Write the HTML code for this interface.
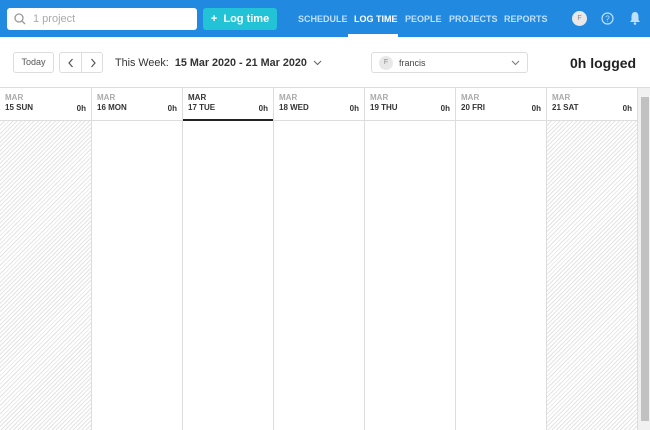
<!DOCTYPE html>
<html><head><style>
*{box-sizing:border-box;margin:0;padding:0}
body{width:650px;height:430px;overflow:hidden;background:#fff;font-family:"Liberation Sans",sans-serif;position:relative}
.top{position:absolute;left:0;top:0;width:650px;height:37px;background:#2189df}
.search{position:absolute;left:7px;top:8px;width:190px;height:22px;background:#fff;border-radius:3px}
.search span{position:absolute;left:26px;top:5px;font-size:11px;color:#aaa}
.btn{position:absolute;left:203px;top:8px;width:74px;height:22px;background:#22c3d6;border-radius:3px;color:#fff;font-size:11px;font-weight:bold;line-height:22px;text-align:center}
.nav{position:absolute;top:14px;font-size:9px;font-weight:bold;color:#bfe0fb}
.av{position:absolute;left:572px;top:11px;width:15px;height:15px;border-radius:50%;background:#e8e8e8;font-size:7px;color:#888;text-align:center;line-height:15px}
.box{position:absolute;border:1px solid #ddd;border-radius:3px;background:#fff}
.col{position:absolute;top:88px;height:342px;width:91px;border-left:1px solid #ddd}
.hatch{background:repeating-linear-gradient(135deg,#fff 0 2px,#e4e4e4 2px 3px)}
.hd{position:absolute;left:0;top:0;width:100%;height:33px;background:#fff;border-bottom:1px solid #ddd;font-size:8px;font-weight:bold;padding:5px 0 0 5px}
.hd .m{color:#aaa}
.hd .d{color:#333;margin-top:1px}
.hd .h{position:absolute;right:5px;top:16px;color:#333}
</style></head><body>
<div class="top">
 <div class="search"><svg style="position:absolute;left:7px;top:5px" width="12" height="12"><circle cx="5" cy="5" r="4" fill="none" stroke="#999" stroke-width="1.3"/><line x1="8" y1="8" x2="11" y2="11" stroke="#999" stroke-width="1.3"/></svg><span>1 project</span></div>
 <div class="btn">+&nbsp; Log time</div>
 <div class="nav" style="left:298px">SCHEDULE</div>
 <div class="nav" style="left:354px;color:#fff">LOG TIME</div>
 <div style="position:absolute;left:348px;top:34px;width:50px;height:3px;background:#fff"></div>
 <div class="nav" style="left:405px">PEOPLE</div>
 <div class="nav" style="left:449px">PROJECTS</div>
 <div class="nav" style="left:504px">REPORTS</div>
 <div class="av">F</div>
 <svg style="position:absolute;left:601px;top:12px" width="13" height="13"><circle cx="6.5" cy="6.5" r="5.5" fill="none" stroke="#bfe0fb" stroke-width="1.2"/><text x="6.5" y="9.5" font-size="8" fill="#bfe0fb" text-anchor="middle" font-family="Liberation Sans">?</text></svg>
 <svg style="position:absolute;left:629px;top:11px" width="12" height="14"><path d="M6 1C3 1 2.5 4 2.5 6V9L1 11H11L9.5 9V6C9.5 4 9 1 6 1Z" fill="#bfe0fb"/><circle cx="6" cy="12.5" r="1.3" fill="#bfe0fb"/></svg>
</div>
<div class="box" style="left:13px;top:52px;width:41px;height:21px;font-size:9px;color:#555;text-align:center;line-height:19px">Today</div>
<div class="box" style="left:59px;top:52px;width:44px;height:21px"><div style="position:absolute;left:21px;top:0;width:1px;height:19px;background:#ddd"></div>
<svg style="position:absolute;left:7px;top:5px" width="8" height="10"><path d="M5.5 1L2 5L5.5 9" fill="none" stroke="#555" stroke-width="1.2"/></svg>
<svg style="position:absolute;left:29px;top:5px" width="8" height="10"><path d="M2.5 1L6 5L2.5 9" fill="none" stroke="#555" stroke-width="1.2"/></svg></div>
<div style="position:absolute;left:115px;top:57px;font-size:10.8px;color:#333;white-space:nowrap">This Week:&nbsp; <b>15 Mar 2020 - 21 Mar 2020</b></div>
<svg style="position:absolute;left:313px;top:60px" width="9" height="6"><path d="M1 1L4.5 4.5L8 1" fill="none" stroke="#666" stroke-width="1.1"/></svg>
<div class="box" style="left:371px;top:52px;width:157px;height:21px"><div style="position:absolute;left:7px;top:3px;width:14px;height:14px;border-radius:50%;background:#e8e8e8;font-size:7px;color:#888;text-align:center;line-height:14px">F</div><span style="position:absolute;left:27px;top:5px;font-size:9px;color:#444">francis</span>
<svg style="position:absolute;left:139px;top:7px" width="9" height="6"><path d="M1 1L4.5 4.5L8 1" fill="none" stroke="#777" stroke-width="1"/></svg></div>
<div style="position:absolute;left:570px;top:55px;font-size:14px;font-weight:bold;color:#222">0h logged</div>
<div style="position:absolute;left:0;top:87px;width:650px;height:1px;background:#ddd"></div>
<div class="col hatch" style="left:0;border-left:none"><div class="hd"><div class="m">MAR</div><div class="d">15 SUN</div><div class="h">0h</div></div></div>
<div class="col" style="left:91px"><div class="hd"><div class="m">MAR</div><div class="d">16 MON</div><div class="h">0h</div></div></div>
<div class="col" style="left:182px"><div class="hd" style="border-bottom:2px solid #222"><div class="m" style="color:#333">MAR</div><div class="d">17 TUE</div><div class="h">0h</div></div></div>
<div class="col" style="left:273px"><div class="hd"><div class="m">MAR</div><div class="d">18 WED</div><div class="h">0h</div></div></div>
<div class="col" style="left:364px"><div class="hd"><div class="m">MAR</div><div class="d">19 THU</div><div class="h">0h</div></div></div>
<div class="col" style="left:455px"><div class="hd"><div class="m">MAR</div><div class="d">20 FRI</div><div class="h">0h</div></div></div>
<div class="col hatch" style="left:546px"><div class="hd"><div class="m">MAR</div><div class="d">21 SAT</div><div class="h">0h</div></div></div>
<div style="position:absolute;left:637px;top:88px;width:13px;height:342px;background:#f1f1f1;border-left:1px solid #ddd"><div style="position:absolute;left:3px;top:9px;width:8px;height:324px;background:#c1c1c1"></div></div>
</body></html>
